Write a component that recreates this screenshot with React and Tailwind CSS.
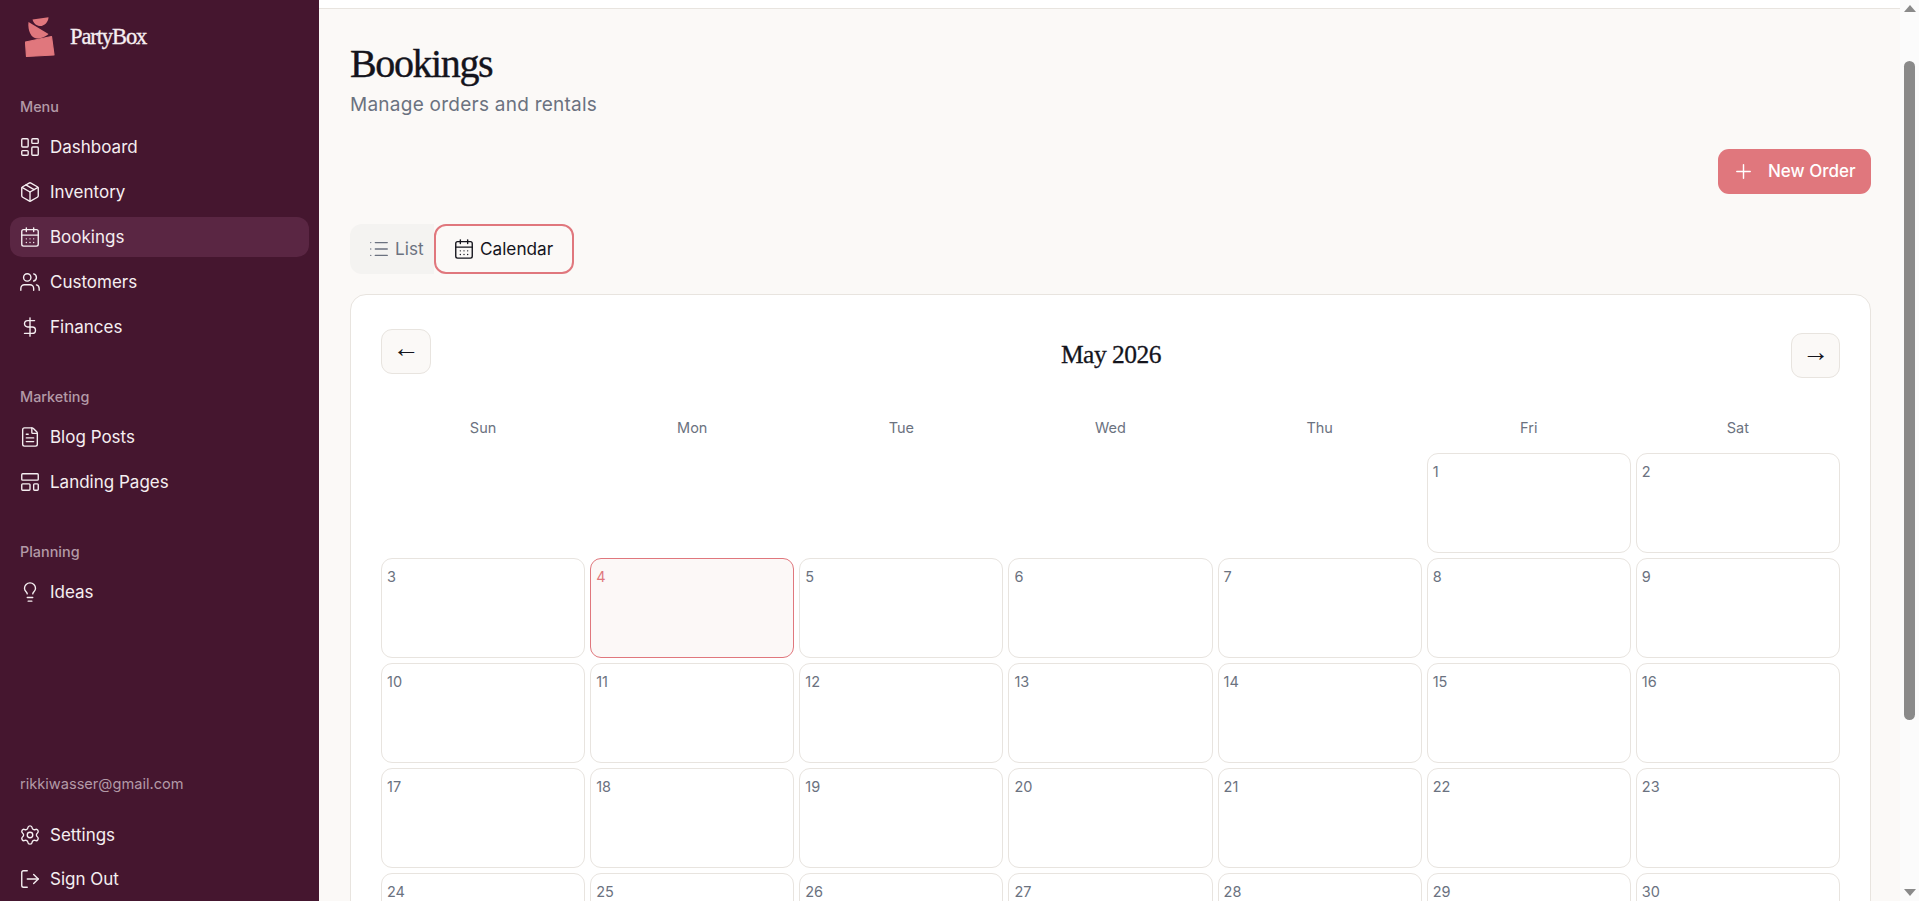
import React from 'react';
import {
  LayoutDashboard, Package, CalendarDays, Users, DollarSign, FileText,
  LayoutTemplate, Lightbulb, Settings, LogOut, List, Plus,
} from 'lucide-react';

const body = "font-['Inter','Noto_Sans',sans-serif]";
const serif = "font-['Liberation_Serif',serif]";

const menu = [
  { label: 'Dashboard', icon: LayoutDashboard },
  { label: 'Inventory', icon: Package },
  { label: 'Bookings', icon: CalendarDays, active: true },
  { label: 'Customers', icon: Users },
  { label: 'Finances', icon: DollarSign },
];
const marketing = [
  { label: 'Blog Posts', icon: FileText },
  { label: 'Landing Pages', icon: LayoutTemplate },
];
const planning = [{ label: 'Ideas', icon: Lightbulb }];
const footer = [
  { label: 'Settings', icon: Settings },
  { label: 'Sign Out', icon: LogOut },
];

const weekDays = ['Sun', 'Mon', 'Tue', 'Wed', 'Thu', 'Fri', 'Sat'];
const days = [null, null, null, null, null];
for (let i = 1; i <= 30; i++) days.push(i);

const Logo = () => (
  <svg width="30" height="41" viewBox="10 7 30 41" className="shrink-0">
    <path d="M17.5 9.5 L33.5 7.2 C33.5 12 29 16.5 24.5 16 C21 15.7 18.5 13 17.5 9.5 Z" fill="#e0777d" />
    <path d="M13.5 12 L33.5 24 C31 26.5 26 28.5 22 28.5 C16 28.5 12.5 20 13.5 12 Z" fill="#e0777d" />
    <path d="M10.5 32 L36.5 26.5 L39 45 L11.5 46.5 Z" fill="#e0777d" stroke="#e0777d" strokeWidth="1.2" strokeLinejoin="round" />
  </svg>
);

const NavItem = ({ item }) => {
  const Icon = item.icon;
  return (
    <div
      className={`h-10 flex items-center gap-[9px] px-[9px] rounded-xl text-[#f5eef1] text-[17px] ${
        item.active ? 'bg-[#5a2643]' : ''
      }`}
    >
      <Icon className="w-[22px] h-[22px] shrink-0" strokeWidth={1.5} />
      <span className="pt-[2px]">{item.label}</span>
    </div>
  );
};

const NavGroup = ({ title, items, className }) => (
  <div className={className}>
    <div className="px-[10px] text-[14.4px] leading-5 font-medium text-[#b39aa7]">{title}</div>
    <div className="mt-[10px] flex flex-col gap-[5px]">
      {items.map(item => <NavItem key={item.label} item={item} />)}
    </div>
  </div>
);

const App = () => {
  return (
    <div className={`h-[901px] flex overflow-hidden bg-white ${body}`}>
      {/* Sidebar */}
      <aside className="w-[319px] shrink-0 bg-[#45162f] flex flex-col px-[10px]">
        <div className="h-[72px] pt-[17px] pl-[15px] flex items-start gap-[15px]">
          <Logo />
          <span className={`mt-[6px] text-[22.5px] leading-7 font-normal tracking-[-1.1px] [-webkit-text-stroke:0.35px_#f6eff2] text-[#f6eff2] ${serif}`}>PartyBox</span>
        </div>
        <NavGroup title="Menu" items={menu} className="mt-[25px]" />
        <NavGroup title="Marketing" items={marketing} className="mt-[40px]" />
        <NavGroup title="Planning" items={planning} className="mt-[40px]" />
        <div className="mt-auto pb-[2px]">
          <div className="px-[10px] text-[14.6px] leading-5 text-[#b39aa7]">rikkiwasser@gmail.com</div>
          <div className="mt-[21px] flex flex-col gap-[4px]">
            {footer.map(item => <NavItem key={item.label} item={item} />)}
          </div>
        </div>
      </aside>

      {/* Main */}
      <main className="flex-1 min-w-0 flex flex-col">
        <div className="h-[9px] shrink-0 bg-white border-b border-[#e8e4df]"></div>
        <div className="flex-1 bg-[#fbf9f7] pl-[31px] pr-[29px] overflow-hidden">
          <h1 className={`mt-[29px] text-[40px] leading-[52px] font-normal tracking-[-1.4px] [-webkit-text-stroke:0.4px_#14141c] text-[#14141c] ${serif}`}>Bookings</h1>
          <p className="mt-[1px] text-[19px] leading-7 tracking-[0.25px] text-[#6b7280]">Manage orders and rentals</p>

          <div className="mt-[30px] flex justify-end">
            <button className="h-[45px] w-[153px] rounded-[11px] bg-[#e0777d] text-white text-[17px] font-medium flex items-center pl-[14px] gap-[13px]">
              <Plus className="w-[23px] h-[23px]" strokeWidth={1.5} />
              New Order
            </button>
          </div>

          <div className="mt-[30px] flex">
            <div className="h-[50px] w-[84px] flex items-center bg-[#f4f3f1] rounded-l-xl pl-[18px] gap-[5px] text-[17.2px] text-[#6b7280]">
              <List className="w-[22px] h-[22px] shrink-0" strokeWidth={1.5} />
              List
            </div>
            <div className="h-[50px] w-[140px] flex items-center border-2 border-[#e0777d] rounded-xl pl-[17px] gap-[5px] text-[17.2px] text-[#14141c]">
              <CalendarDays className="w-[22px] h-[22px] shrink-0" strokeWidth={1.5} />
              Calendar
            </div>
          </div>

          {/* Calendar card */}
          <section className="mt-[20px] bg-white border border-[#e8e4df] rounded-2xl px-[30px] pt-[34px]">
            <div className="flex items-start justify-between">
              <button className="w-[50px] h-[45px] pb-[6px] rounded-[11px] border border-[#e8e4df] bg-[#fbf9f7] text-[#14141c] text-[27px] leading-none flex items-center justify-center font-['Liberation_Sans',sans-serif]">←</button>
              <h2 className={`mt-[10px] text-[25.5px] leading-8 font-normal tracking-[-0.5px] [-webkit-text-stroke:0.3px_#14141c] text-[#14141c] ${serif}`}>May 2026</h2>
              <button className="mt-[4px] w-[49px] h-[45px] pb-[6px] rounded-[11px] border border-[#e8e4df] bg-[#fbf9f7] text-[#14141c] text-[27px] leading-none flex items-center justify-center font-['Liberation_Sans',sans-serif]">→</button>
            </div>

            <div className="mt-[40px] grid grid-cols-7 gap-[5px]">
              {weekDays.map(d => (
                <div key={d} className="text-center text-[14.5px] leading-5 text-[#6b7280]">{d}</div>
              ))}
            </div>

            <div className="mt-[15px] grid grid-cols-7 gap-[5px]">
              {days.map((d, i) => {
                if (!d) return <div key={i} className="h-[100px]"></div>;
                const today = d === 4;
                return (
                  <div
                    key={i}
                    className={`h-[100px] rounded-[11px] border px-[5px] py-[8px] text-[14.5px] leading-5 ${
                      today ? 'border-[#e0777d] bg-[#fcf8f7] text-[#e0777d]' : 'border-[#e8e4df] bg-white text-[#6b7280]'
                    }`}
                  >
                    {d}
                  </div>
                );
              })}
            </div>
          </section>
        </div>
      </main>

      {/* Scrollbar */}
      <div className="w-[19px] shrink-0 bg-[#fbfbfb] flex flex-col items-center">
        <svg width="12" height="7" viewBox="0 0 12 7" className="mt-[5px] shrink-0"><path d="M6 0 L12 7 L0 7 Z" fill="#8a8a8a" /></svg>
        <div className="mt-[49px] w-[11px] h-[659px] rounded-full bg-[#8a8a8a]"></div>
        <svg width="12" height="7" viewBox="0 0 12 7" className="mt-auto mb-[5px] shrink-0"><path d="M0 0 L12 0 L6 7 Z" fill="#8a8a8a" /></svg>
      </div>
    </div>
  );
};

export default App;
